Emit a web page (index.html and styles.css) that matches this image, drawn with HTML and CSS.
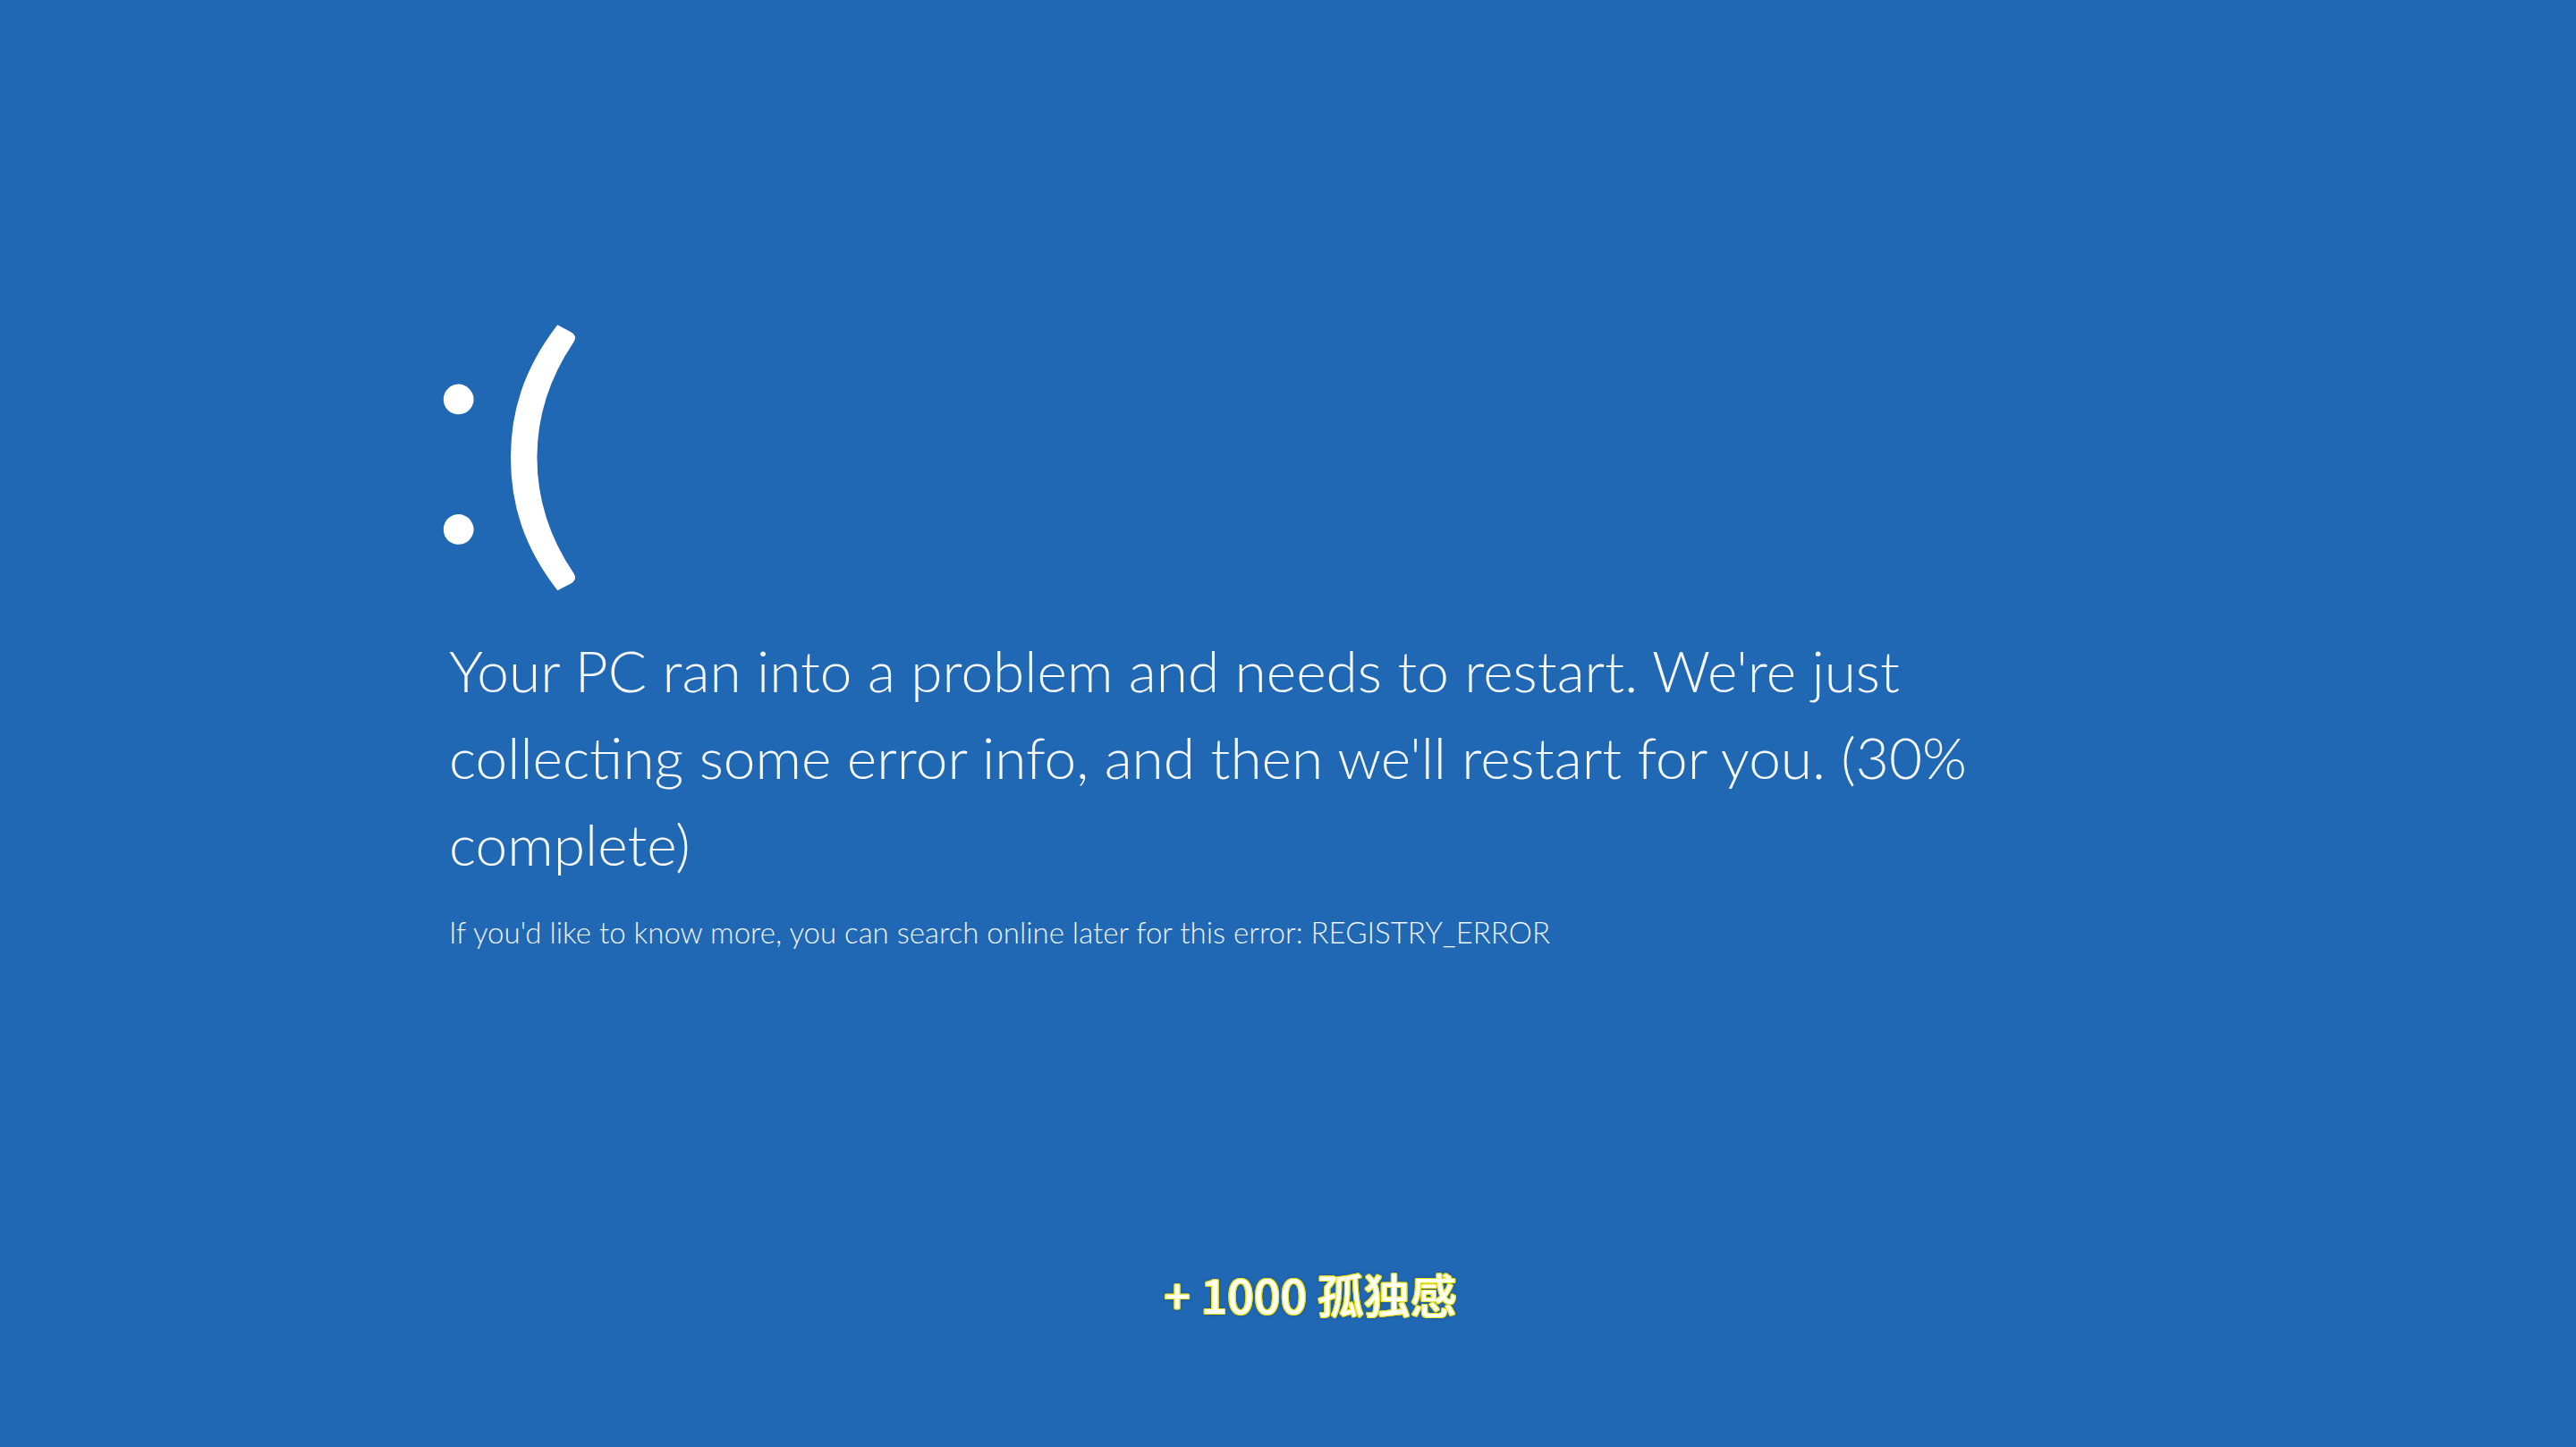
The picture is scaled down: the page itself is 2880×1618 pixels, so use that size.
FILE: index.html
```html
<!DOCTYPE html>
<html lang="en">
<head>
<meta charset="utf-8">
<title>Your PC ran into a problem</title>
<link rel="stylesheet" href="styles.css">
</head>
<body>
<main class="screen">
  <div class="face">:<span class="mouth">(</span></div>
  <p class="message">Your PC ran into a problem and needs to restart. We're just collecting some error info, and then we'll restart for you. (30% complete)</p>
  <p class="details">If you'd like to know more, you can search online later for this error: REGISTRY_ERROR</p>
</main>
<p class="caption">+ 1000 孤独感</p>
</body>
</html>
```
FILE: styles.css
```css
html, body {
  margin: 0;
  padding: 0;
}

body {
  width: 2880px;
  height: 1618px;
  overflow: hidden;
  background: #2067b4;
  color: #ffffff;
  font-family: "Lato", "Open Sans", sans-serif;
  display: flex;
  flex-direction: column;
}

.screen {
  display: flex;
  flex-direction: column;
  align-items: flex-start;
  padding: 295px 0 0 502px;
}

.face {
  margin: 0 0 0 -33px;
  font-family: "Lato", sans-serif;
  font-weight: 300;
  font-size: 365px;
  line-height: 340px;
  white-space: nowrap;
}

.mouth {
  display: inline-block;
  font-weight: 400;
  font-size: 322px;
  vertical-align: -7px;
  transform: scaleX(1.18);
  transform-origin: 20% 50%;
}

.message {
  margin: 42px 0 0 0;
  width: 1760px;
  font-family: "Lato", sans-serif;
  font-weight: 300;
  font-size: 64px;
  line-height: 97px;
  color: #f7faff;
}

.details {
  margin: 25px 0 0 0;
  font-family: "Lato", sans-serif;
  font-weight: 300;
  font-size: 33px;
  line-height: 50px;
  color: #eef4fc;
}

.caption {
  margin: 345px 0 0 0;
  padding-left: 50px;
  text-align: center;
  font-family: "Noto Sans CJK SC", "Noto Sans", sans-serif;
  font-weight: 500;
  font-size: 52px;
  line-height: 70px;
  color: #fffff2;
  text-shadow:
    1.3px 0 0 #e9e21c,
    -1.3px 0 0 #e9e21c,
    0 1.3px 0 #e9e21c,
    0 -1.3px 0 #e9e21c,
    1px 1px 0 #e9e21c,
    -1px -1px 0 #e9e21c,
    1px -1px 0 #e9e21c,
    -1px 1px 0 #e9e21c,
    0 0 4px rgba(50, 55, 0, 0.6);
}
```
